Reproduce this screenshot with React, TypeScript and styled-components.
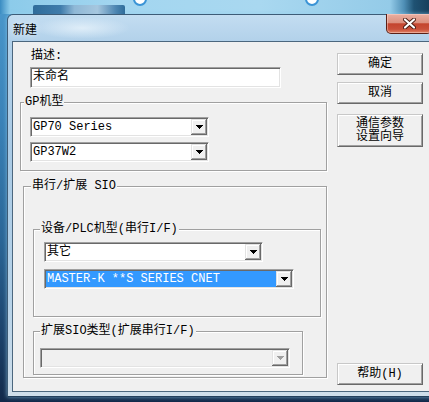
import React from "react";
import styled, { createGlobalStyle } from "styled-components";

const GlobalStyle = createGlobalStyle`
  html, body { margin: 0; padding: 0; }
  body {
    width: 429px;
    height: 402px;
    overflow: hidden;
    background: linear-gradient(180deg, #4a98cc 0%, #3a82b8 30%, #2a6596 60%, #1b4068 85%, #12294a 100%);
    font-family: "Liberation Mono", "Noto Sans CJK SC", monospace;
    font-size: 12px;
    color: #000;
  }
  * { box-sizing: border-box; }
`;

const Desktop = styled.div`
  width: 429px;
  height: 402px;
  overflow: hidden;
`;

const DesktopStrip = styled.div`
  height: 14px;
  display: flex;
  align-items: flex-start;
  background: linear-gradient(90deg, #3a8cc2 0px, #8ccbea 10px, #a3d6f0 120px, #a9d8f0 260px, #94cbe8 390px, #4f8fb6 404px, #1f5273 414px, #173f5c 429px);
`;

const TaskBlock = styled.div`
  margin: 5px 0 0 33px;
  width: 92px;
  height: 9px;
  border-radius: 2px 2px 0 0;
  background: linear-gradient(90deg, #2f6c9a 0%, #3f7cab 30%, #8fb8d6 45%, #a6c7df 70%, #4d86b2 90%, #2f6c9a 100%);
`;

const Dot = styled.div<{ $ml: number }>`
  margin: -8px 0 0 ${(p) => p.$ml}px;
  width: 14px;
  height: 14px;
  border-radius: 50%;
  background: #ffffff;
  border: 2px solid #3b94d6;
`;

const Window = styled.div`
  margin-left: 7px;
  width: 430px;
  border: 1px solid #3d5c77;
  border-bottom-color: #23405c;
  border-radius: 6px 6px 0 0;
  padding: 0 4px 4px 4px;
  background: linear-gradient(180deg, #c3ddf1 0%, #b2d1ea 7%, #a9cae5 35%, #b6d2e8 75%, #cfdeea 100%);
  box-shadow: 0 0 4px rgba(150, 210, 240, 0.7);
`;

const TitleBar = styled.div`
  height: 26px;
  display: flex;
  align-items: flex-start;
  background: radial-gradient(ellipse 48px 11px at 70px 13px, rgba(235, 245, 252, 0.75), rgba(235, 245, 252, 0) 100%);
`;

const Title = styled.div`
  margin: 7px 0 0 1px;
  line-height: 14px;
  font-family: "Noto Sans CJK SC", sans-serif;
  font-size: 12px;
  color: #000;
  text-shadow: 0 0 6px rgba(255, 255, 255, 0.95);
`;

const CloseButton = styled.div`
  margin: -1px 0 0 auto;
  width: 46px;
  height: 20px;
  border: 1px solid #5b2016;
  border-top: none;
  border-radius: 0 0 5px 5px;
  background: linear-gradient(180deg, #eab0a2 0%, #dc907f 45%, #c4442e 52%, #c9503a 80%, #e08366 100%);
  box-shadow: inset 0 0 0 1px rgba(255, 220, 210, 0.45);
  display: flex;
  align-items: center;
  justify-content: center;
`;

const Client = styled.div`
  height: 351px;
  border: 1px solid #4c677e;
  background: #f0f0f0;
  display: grid;
  grid-template-columns: 307px 86px;
  column-gap: 10px;
  padding-left: 7px;
`;

const MainColumn = styled.div`
  display: flex;
  flex-direction: column;
  align-items: flex-start;
`;

const ButtonColumn = styled.div`
  display: flex;
  flex-direction: column;
`;

const FieldLabel = styled.div`
  margin: 7px 0 0 11px;
  line-height: 14px;
`;

const TextBox = styled.div`
  margin: 4px 0 0 10px;
  width: 251px;
  height: 21px;
  border: 1px solid;
  border-color: #a0a0a0 #ffffff #ffffff #a0a0a0;
  box-shadow: inset 1px 1px 0 #696969, inset -1px -1px 0 #e3e3e3;
  background: #fff;
  padding: 1px 0 0 2px;
  line-height: 17px;
`;

const GroupBox = styled.fieldset<{ $w: number; $ml: number; $mt: number; $mb: number }>`
  margin: ${(p) => p.$mt}px 0 ${(p) => p.$mb}px ${(p) => p.$ml}px;
  width: ${(p) => p.$w}px;
  min-width: 0;
  padding: 0;
  border: 1px solid #a0a0a0;
  box-shadow: inset 1px 1px 0 #ffffff, 1px 1px 0 #ffffff;
  display: flex;
  flex-direction: column;
  align-items: flex-start;
`;

const Legend = styled.legend<{ $ml: number }>`
  margin-left: ${(p) => p.$ml}px;
  padding: 0 1px;
  line-height: 14px;
  background: #f0f0f0;
`;

const Combo = styled.div<{ $w: number; $mt: number; $ml: number; $disabled?: boolean }>`
  display: flex;
  width: ${(p) => p.$w}px;
  height: 20px;
  margin: ${(p) => p.$mt}px 0 0 ${(p) => p.$ml}px;
  border: 1px solid;
  border-color: #a0a0a0 #ffffff #ffffff #a0a0a0;
  box-shadow: inset 1px 1px 0 #696969, inset -1px -1px 0 #e3e3e3;
  background: ${(p) => (p.$disabled ? "#f0f0f0" : "#ffffff")};
  padding: 1px;
`;

const ComboText = styled.div<{ $selected?: boolean }>`
  flex: 1;
  height: 16px;
  line-height: 16px;
  padding-left: 1px;
  white-space: pre;
  overflow: hidden;
  background: ${(p) => (p.$selected ? "#3399ff" : "transparent")};
  color: ${(p) => (p.$selected ? "#ffffff" : "#000000")};
`;

const DropButton = styled.div`
  width: 16px;
  height: 16px;
  background: #f0f0f0;
  box-shadow: inset -1px -1px 0 #696969, inset 1px 1px 0 #e3e3e3, inset -2px -2px 0 #a0a0a0, inset 2px 2px 0 #ffffff;
  display: flex;
  align-items: center;
  justify-content: center;
`;

const PushButton = styled.button<{ $h: number; $mt: number; $mb?: number; $auto?: boolean }>`
  width: 86px;
  height: ${(p) => p.$h}px;
  margin: ${(p) => (p.$auto ? "auto" : `${p.$mt}px`)} 0 ${(p) => p.$mb ?? 0}px 0;
  padding: 0;
  font: inherit;
  font-size: 12px;
  line-height: 13px;
  color: #000;
  background: #f0f0f0;
  border: 1px solid;
  border-color: #c8c8c8 #696969 #696969 #c8c8c8;
  box-shadow: inset 1px 1px 0 #ffffff, inset -1px -1px 0 #a0a0a0;
`;

const Arrow: React.FC<{ color?: string }> = ({ color = "#000" }) => (
  <svg width="7" height="4" viewBox="0 0 7 4" shapeRendering="crispEdges">
    <rect x="0" y="0" width="7" height="1" fill={color} />
    <rect x="1" y="1" width="5" height="1" fill={color} />
    <rect x="2" y="2" width="3" height="1" fill={color} />
    <rect x="3" y="3" width="1" height="1" fill={color} />
  </svg>
);

const ComboBox: React.FC<{
  w: number;
  mt: number;
  ml: number;
  text?: string;
  selected?: boolean;
  disabled?: boolean;
}> = ({ w, mt, ml, text = "", selected, disabled }) => (
  <Combo $w={w} $mt={mt} $ml={ml} $disabled={disabled}>
    <ComboText $selected={selected}>{text}</ComboText>
    <DropButton>
      <Arrow color={disabled ? "#a0a0a0" : "#000"} />
    </DropButton>
  </Combo>
);

export default function App() {
  return (
    <>
      <GlobalStyle />
      <Desktop>
        <DesktopStrip>
          <TaskBlock />
          <Dot $ml={8} />
          <Dot $ml={158} />
        </DesktopStrip>
        <Window>
          <TitleBar>
            <Title>新建</Title>
            <CloseButton>
              <svg width="13" height="11" viewBox="0 0 13 11">
                <path d="M2 1.5 L11 9.5 M11 1.5 L2 9.5" stroke="#4a1a12" strokeWidth="4" strokeLinecap="round" />
                <path d="M2 1.5 L11 9.5 M11 1.5 L2 9.5" stroke="#ffffff" strokeWidth="2.2" strokeLinecap="round" />
              </svg>
            </CloseButton>
          </TitleBar>
          <Client>
            <MainColumn>
              <FieldLabel>描述:</FieldLabel>
              <TextBox>未命名</TextBox>
              <GroupBox $w={307} $ml={0} $mt={7} $mb={0}>
                <Legend $ml={3}>GP机型</Legend>
                <ComboBox w={179} mt={8} ml={9} text="GP70 Series" />
                <ComboBox w={179} mt={5} ml={9} text="GP37W2" />
                <div style={{ height: 8 }} />
              </GroupBox>
              <GroupBox $w={304} $ml={3} $mt={8} $mb={0}>
                <Legend $ml={7}>串行/扩展 SIO</Legend>
                <GroupBox $w={288} $ml={9} $mt={29} $mb={0}>
                  <Legend $ml={6}>设备/PLC机型(串行I/F)</Legend>
                  <ComboBox w={219} mt={6} ml={10} text="其它" />
                  <ComboBox w={250} mt={7} ml={10} text="MASTER-K **S SERIES CNET" selected />
                  <div style={{ height: 27 }} />
                </GroupBox>
                <GroupBox $w={270} $ml={9} $mt={7} $mb={2}>
                  <Legend $ml={6}>扩展SIO类型(扩展串行I/F)</Legend>
                  <ComboBox w={250} mt={10} ml={6} disabled />
                  <div style={{ height: 6 }} />
                </GroupBox>
              </GroupBox>
            </MainColumn>
            <ButtonColumn>
              <PushButton $h={22} $mt={11}>确定</PushButton>
              <PushButton $h={22} $mt={7}>取消</PushButton>
              <PushButton $h={33} $mt={10}>
                通信参数
                <br />
                设置向导
              </PushButton>
              <PushButton $h={22} $mt={0} $auto $mb={6}>帮助(H)</PushButton>
            </ButtonColumn>
          </Client>
        </Window>
      </Desktop>
    </>
  );
}
